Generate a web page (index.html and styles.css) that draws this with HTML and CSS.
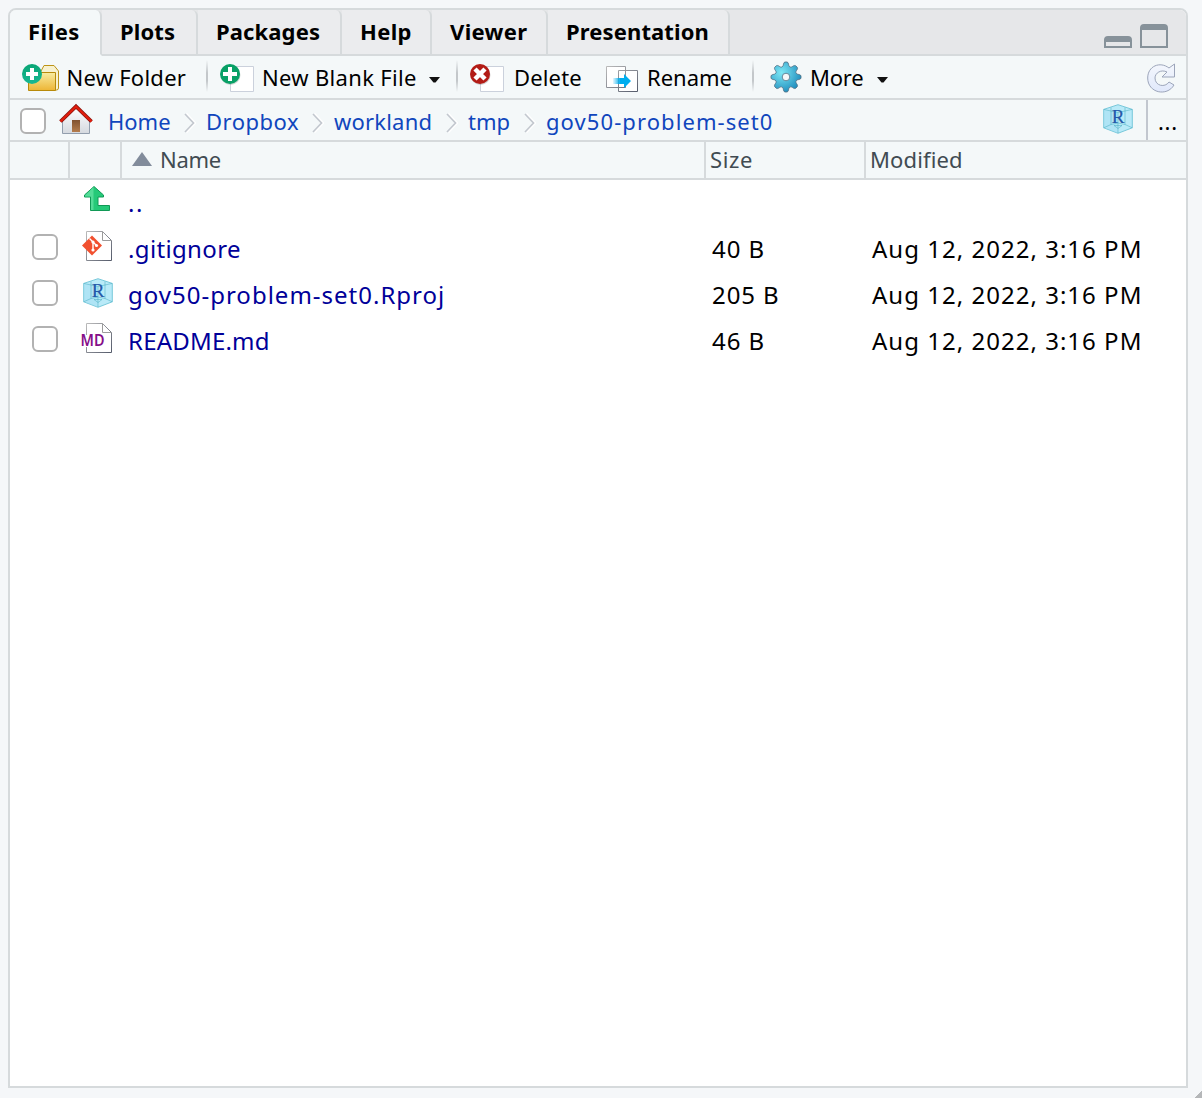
FILE: index.html
```html
<!DOCTYPE html>
<html lang="en">
<head>
<meta charset="utf-8">
<title>Files</title>
<link rel="stylesheet" href="styles.css">
</head>
<body>
<svg class="defs" width="0" height="0" aria-hidden="true">
  <defs>
    <linearGradient id="fold" x1="0" y1="0" x2="0" y2="1"><stop offset="0" stop-color="#f8eca0"/><stop offset="1" stop-color="#edb535"/></linearGradient>
    <linearGradient id="teal" x1="0" y1="0" x2="0" y2="1"><stop offset="0" stop-color="#08a574"/><stop offset="1" stop-color="#18b893"/></linearGradient>
    <linearGradient id="wall" x1="0" y1="0" x2="0" y2="1"><stop offset="0" stop-color="#fff"/><stop offset="1" stop-color="#d5d9df"/></linearGradient>
    <linearGradient id="door" x1="0" y1="0" x2="0" y2="1"><stop offset="0" stop-color="#80512f"/><stop offset="1" stop-color="#b57d4d"/></linearGradient>
    <linearGradient id="arrow" x1="0" y1="0" x2="1" y2="0"><stop offset="0" stop-color="#00aeef" stop-opacity=".1"/><stop offset=".4" stop-color="#00aeef"/></linearGradient>
    <linearGradient id="gray" x1="0" y1="0" x2="1" y2="1"><stop offset="0" stop-color="#bbb"/><stop offset="1" stop-color="#555b6b"/></linearGradient>
    <radialGradient id="gearfill" cx=".35" cy=".35" r=".7"><stop offset="0" stop-color="#7de8f5"/><stop offset="1" stop-color="#208dbd"/></radialGradient>
    <linearGradient id="ref" x1="0" y1="0" x2="0" y2="1"><stop offset="0" stop-color="#f4f7fd"/><stop offset="1" stop-color="#e0e8fb"/></linearGradient>
    <symbol id="cube" viewBox="0 0 30 30">
      <path d="M.7 5.400 15 .7l14.300 4.700v18.400L15 29.300.7 23.800z" fill="#b9eaf8" stroke="#6cc3d6" stroke-width=".9"/>
      <path d="M.7 5.400 15 8.500v20.800L.7 23.800z" fill="#a0ddf0" opacity=".4"/>
      <path d="M15 8.500V29M.7 5.400 15 8.500l14.300-3.100M.7 23.800 8 20.500l7-1.500 7 1.500 7.300 3.300M8 20.500V3.500M22 20.500V3.500M11 21.500h8l-4 3z" fill="none" stroke="#42a9bd" stroke-width=".7" opacity=".7"/>
      <text x="15" y="18.500" text-anchor="middle" class="cube-r">R</text>
    </symbol>
    <symbol id="page" viewBox="0 0 28 32"><path d="M1.500 1.500h16l9 9v20h-25z" fill="#fff" stroke="url(#gray)"/><path d="M17.500 1.500v9h9" fill="none" stroke="#9b9b9b"/></symbol>
    <symbol id="chev" viewBox="0 0 12 20"><path d="m2 1 8.500 9L2 19" fill="none" stroke="#fff" stroke-width="3"/><path d="m1 1 8.500 9L1 19" fill="none" stroke="#c3c8cf" stroke-width="1.700"/></symbol>
  </defs>
</svg>
<main class="pane">
  <nav class="tabs">
    <div class="tab active w-files"><span>Files</span></div>
    <div class="tab w-plots"><span>Plots</span></div>
    <div class="tab w-packages"><span>Packages</span></div>
    <div class="tab w-help"><span>Help</span></div>
    <div class="tab w-viewer"><span>Viewer</span></div>
    <div class="tab w-pres"><span>Presentation</span></div>
    <div class="winbtns">
      <svg width="28" height="12"><path d="M0 12V4q0-4 4-4h20q4 0 4 4v8zM2 6v4h24V6z" fill="#87929a" fill-rule="evenodd"/></svg>
      <svg width="28" height="24"><path d="M0 24V4q0-4 4-4h20q4 0 4 4v20zM2 6v16h24V6z" fill="#87929a" fill-rule="evenodd"/></svg>
    </div>
  </nav>
  <div class="toolbar">
    <div class="tool t-folder">
      <svg width="40" height="32"><path d="M18.500 8 22 1.500h10L36.500 7v17q0 2-2 2H22z" fill="#f7f1cf" stroke="#bd9417"/><path d="M6.500 8.500h27v18h-27z" fill="url(#fold)" stroke="#b88a0a"/><circle cx="10" cy="10" r="10" fill="url(#teal)"/><path d="M10 4v12M4 10h12" stroke="#fff" stroke-width="4"/></svg>
      <span>New Folder</span>
    </div>
    <i class="sep"></i>
    <div class="tool t-file">
      <svg width="36" height="32"><path d="M10.500 2.500h23v25h-23z" fill="#fff" stroke="#cbd1dc"/><circle cx="10.500" cy="11" r="10" fill="#687" opacity=".3"/><circle cx="10" cy="10" r="10" fill="#08a066"/><path d="M10 3v14M3 10h14" stroke="#fff" stroke-width="4"/></svg>
      <span>New Blank File</span>
      <svg class="caret" width="12" height="6"><path d="M0 0h11L6.500 5.500h-2z" fill="#111"/></svg>
    </div>
    <i class="sep"></i>
    <div class="tool t-delete">
      <svg width="36" height="32"><path d="M10.500 2.500h23v25h-23z" fill="#fff" stroke="#cbd1dc"/><circle cx="10.500" cy="11" r="10" fill="#766" opacity=".3"/><circle cx="10" cy="10" r="10" fill="#b31c16"/><path d="m5 5 10 10M15 5 5 15" stroke="#fff" stroke-width="4.500"/></svg>
      <span>Delete</span>
    </div>
    <div class="tool t-rename">
      <svg width="34" height="32"><path d="M.5 2.500h19v21H.5zM12.500 6.500h19v21h-19z" fill="#fff" stroke="url(#gray)"/><path d="M7 14h11v-4l7 7-7 7v-4H7z" fill="url(#arrow)"/></svg>
      <span>Rename</span>
    </div>
    <i class="sep"></i>
    <div class="tool t-more">
      <svg width="32" height="32" viewBox="-16 -16 32 32"><path d="M-4-10C-2-11-3-15-1-15H1C3-15 2-11 4-10 6-9 8-13 10-11L11-10C13-8 9-6 10-4 11-2 15-3 15-1V1C15 3 11 2 10 4 9 6 13 8 11 10L10 11C8 13 6 9 4 10 2 11 3 15 1 15H-1C-3 15-2 11-4 10-6 9-8 13-10 11L-11 10C-13 8-9 6-10 4-11 2-15 3-15 1V-1C-15-3-11-2-10-4-9-6-13-8-11-10L-10-11C-8-13-6-9-4-10Z" fill="url(#gearfill)" stroke="#526f83" stroke-width=".8"/><circle r="3.800" fill="#f5f8f9" stroke="#64889a"/></svg>
      <span>More</span>
      <svg class="caret" width="12" height="6"><path d="M1 0h11L7.500 5.500h-2z" fill="#111"/></svg>
    </div>
    <svg class="refresh" width="30" height="32"><path d="M22 5 27.500 1v13H15l5-5C14 6 8 10 8 15c0 8 10 10 14 4l5 3C20 34 .7 30 .7 15 .7 3 13-2 22 5Z" fill="url(#ref)" stroke="#9ca5ba"/></svg>
  </div>
  <div class="path">
    <b class="check"></b>
    <svg class="home" width="34" height="31"><path d="M3.500 16 17 3l13.500 13v13.500h-27z" fill="url(#wall)"/><path d="M3.500 16v13.500h27V16" fill="none" stroke="#929ead"/><path d="M13 16h8v12h-8z" fill="url(#door)"/><path d="M1.500 17.500 17 2.500l15.500 15" fill="none" stroke="#8b1710" stroke-width="3.800"/><path d="M1.500 17.500 17 2.500l15.500 15" fill="none" stroke="#e21d0c" stroke-width="2.200"/></svg>
    <a class="c-home">Home</a><svg class="chev"><use href="#chev"/></svg>
    <a class="c-drop">Dropbox</a><svg class="chev"><use href="#chev"/></svg>
    <a class="c-work">workland</a><svg class="chev"><use href="#chev"/></svg>
    <a class="c-tmp">tmp</a><svg class="chev"><use href="#chev"/></svg>
    <a class="c-gov">gov50-problem-set0</a>
    <svg class="proj"><use href="#cube"/></svg>
    <div class="dots">...</div>
  </div>
  <div class="head grid">
    <div></div><div></div>
    <div class="name"><svg width="20" height="14"><path d="M10 0 20 14H0z" fill="#828c9b"/></svg><span>Name</span></div>
    <div class="size"><span>Size</span></div><div><span class="modified">Modified</span></div>
  </div>
  <section class="rows">
    <div class="row grid up">
      <div></div><div class="icon"><svg width="30" height="30"><path d="M12 2.500 21.500 11v2H16v8.500h11.500v5H8.500V13H2.500v-2z" fill="#25c978" stroke="#119956"/><path d="M11.500 3v23H9V12.500H3v-1z" fill="#55dc98"/></svg></div><div class="file"><span class="upname">..</span></div><div></div><div></div>
    </div>
    <div class="row grid">
      <div><b class="check"></b></div><div class="icon"><svg width="32" height="32"><use href="#page" x="4" width="28" height="32"/><path d="M11 5.500 21 15.500l-10 10-10-10z" fill="#f1502f"/><path d="M8.500 8.500 12 12v9M12 12l4 4" fill="none" stroke="#fff" stroke-width="1.400"/><circle cx="12" cy="12" r="1.600" fill="#fff"/><circle cx="12" cy="20" r="1.600" fill="#fff"/><circle cx="15.500" cy="15.500" r="1.600" fill="#fff"/></svg></div><div class="file"><span class="f-git">.gitignore</span></div><div class="bytes"><span>40 B</span></div><div class="date"><span>Aug 12, 2022, 3:16 PM</span></div>
    </div>
    <div class="row grid">
      <div><b class="check"></b></div><div class="icon"><svg class="rcube"><use href="#cube"/></svg></div><div class="file"><span class="f-proj">gov50-problem-set0.Rproj</span></div><div class="bytes"><span>205 B</span></div><div class="date"><span>Aug 12, 2022, 3:16 PM</span></div>
    </div>
    <div class="row grid">
      <div><b class="check"></b></div><div class="icon"><svg width="32" height="32"><use href="#page" x="4" width="28" height="32"/><path d="M0 13h23v12H0z" fill="#fff"/><text x="-.5" y="24" class="md" textLength="24" lengthAdjust="spacingAndGlyphs">MD</text></svg></div><div class="file"><span class="f-read">README.md</span></div><div class="bytes"><span>46 B</span></div><div class="date"><span>Aug 12, 2022, 3:16 PM</span></div>
    </div>
  </section>
</main>
<i class="corner"></i>
</body>
</html>
```
FILE: styles.css
```css
* { box-sizing: border-box; }
body { margin: 0; height: 1098px; padding: 8px 14px 10px 8px; overflow: hidden; background: #f5f7f9; font: 22px/28px "Noto Sans", "Open Sans", sans-serif; color: #000; }
.defs { position: absolute; }
svg { display: block; flex: none; overflow: visible; }
span, a { white-space: nowrap; }
.pane { height: 1080px; border: 2px solid #d6dadc; border-radius: 8px 8px 0 0; background: #fff; overflow: hidden; }
.tabs { display: flex; height: 46px; background: #e6e7e9; }
.tab { border-right: 2px solid #d6dadc; border-bottom: 2px solid #d6dadc; background: #ebecee; padding: 7px 0 0 18px; font-weight: 700; letter-spacing: .12px; flex: none; border-radius: 0 6px 0 0; }
.tab.active { background: #f4f8f9; border-bottom-color: #f4f8f9; }
.w-files { width: 92px; }
.tab.w-files { letter-spacing: .5px; }
.w-plots { width: 96px; }
.w-packages { width: 144px; }
.w-help { width: 90px; }
.tab.w-help, .tab.w-viewer { letter-spacing: .35px; }
.w-viewer { width: 116px; }
.w-pres { width: 182px; }
.winbtns { flex: 1; display: flex; justify-content: flex-end; align-items: flex-end; gap: 8px; padding: 0 18px 6px 0; border-bottom: 2px solid #d6dadc; }
.toolbar { height: 44px; display: flex; border-bottom: 2px solid #d6dadc; background: #f4f8f9; padding-left: 12px; }
.tool { display: flex; flex: none; padding-top: 7px; }
.tool > svg:first-child { flex: none; margin-top: 1px; }
.t-folder { width: 184px; letter-spacing: .25px; }
.t-folder > svg { width: 44.5px; }
.t-file { width: 236px; letter-spacing: .32px; }
.t-file > svg:first-child { width: 42px; }
.t-file > span { width: 167px; }
.t-delete { width: 136px; letter-spacing: .15px; }
.t-delete > svg { width: 44px; }
.t-rename { width: 146px; }
.t-rename > svg { width: 41px; }
.t-more { width: 381px; }
.t-more > svg:first-child { margin-top: -2px; width: 40px; }
.t-more > span { width: 66px; letter-spacing: -.2px; }
.caret { margin-top: 14px; }
.sep { flex: none; width: 2px; height: 32px; margin: 4px 12px 0 0; background: linear-gradient(#f4f8f9, #c3c7ca 40%, #c3c7ca 65%, #f4f8f9); }
.t-rename + .sep { margin-right: 16px; }
.t-rename + .sep + .t-more { margin-left: -4px; }
.t-more > span { margin-left: 4px; }
.refresh { margin-top: 7px; }
.path { height: 42px; display: flex; border-bottom: 2px solid #d6dadc; background: #f4f8f9; padding-left: 10px; color: #1046bd; }
.check { display: block; flex: none; width: 26px; height: 26px; border: 2px solid #b2b2b2; border-radius: 6px; background: #fff; }
.path .check { margin-top: 8px; }
.home { margin: 4px 15px 0 13px; }
.path a { padding-top: 7px; flex: none; }
.chev { width: 12px; height: 20px; margin: 13px 10px 0 0; }
.c-home { width: 76px; }
.c-drop { width: 106px; letter-spacing: .5px; }
.c-work { width: 112px; letter-spacing: .2px; }
.c-tmp { width: 56px; }
.c-gov { width: 557px; letter-spacing: 1.08px; }
.proj { width: 30px; height: 30px; margin: 4px 13px 0 0; }
.cube-r { font: 19px "Liberation Serif", serif; fill: #2459a8; stroke: #2459a8; stroke-width: .2px; }
.dots { flex: 1; border-left: 2px solid #c2c7cf; padding: 7px 0 0 10px; color: #000; letter-spacing: .7px; }
.grid { display: grid; grid-template-columns: 60px 52px 584px 160px 1fr; }
.head { height: 38px; background: #f4f8f9; border-bottom: 2px solid #d6dadc; color: #414b52; }
.head > div { border-right: 2px solid #d6dadc; padding: 3px 0 0 4px; }
.head > div:last-child { border: 0; }
.head .name { display: flex; padding-left: 10px; gap: 8px; letter-spacing: -.3px; }
.size { letter-spacing: .6px; }
.modified { letter-spacing: .12px; }
.name svg { margin-top: 7px; }
.row { height: 46px; font-size: 24px; line-height: 32px; }
.up { height: 44px; }
.row .check { margin: 10px 0 0 22px; }
.row .icon { padding: 6px 0 0 11px; }
.up .icon { padding: 4px 0 0 12px; }
.rcube { width: 30px; height: 30px; margin: 2px 0 0 1.5px; }
.file { color: #000099; padding: 9px 0 0 6px; }
.up .file { padding-top: 7px; }
.upname { letter-spacing: 1.5px; }
.f-git { letter-spacing: .35px; }
.f-proj { letter-spacing: 1px; }
.f-read { letter-spacing: .2px; }
.bytes { padding: 9px 0 0 6px; letter-spacing: .9px; }
.date { padding: 9px 0 0 6px; letter-spacing: 1.02px; }
.md { font: 600 16px "Noto Sans", sans-serif; fill: #850f89; }
.corner { position: absolute; right: 0; bottom: 0; width: 7px; height: 8px; background: linear-gradient(135deg, transparent 50%, #b5b7b9 52%); }
```
